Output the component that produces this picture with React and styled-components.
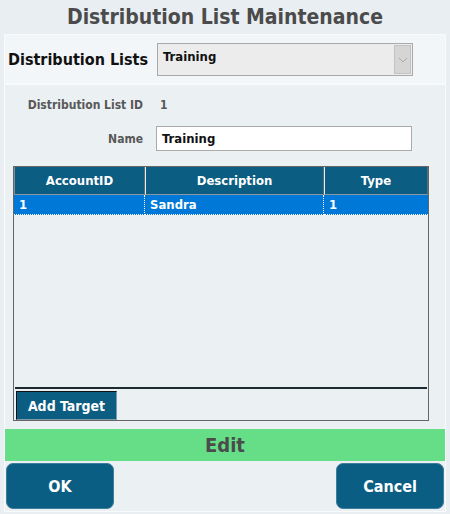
import styled, { createGlobalStyle } from 'styled-components';

const GlobalStyle = createGlobalStyle`
  html, body {
    margin: 0;
    padding: 0;
    background: #e9eef2;
  }
  body {
    font-family: "DejaVu Sans Condensed", "DejaVu Sans", sans-serif;
    font-weight: bold;
  }
`;

const Page = styled.div`
  width: 450px;
  height: 514px;
  box-sizing: border-box;
  padding: 0 4px 3px 4px;
  display: flex;
  flex-direction: column;
`;

const Title = styled.h1`
  margin: 0;
  height: 34px;
  line-height: 34px;
  text-align: center;
  font-size: 21px;
  color: #4b4b4b;
`;

const Panel = styled.div`
  flex: 1;
  display: flex;
  flex-direction: column;
  border: 1px solid #f8fafb;
  background: #ebf0f3;
`;

const ListBar = styled.div`
  height: 48px;
  display: flex;
  align-items: center;
  gap: 9px;
  padding-left: 3px;
  background: #f3f6f8;
  border-bottom: 2px solid #f8fafb;
  font-size: 16px;
  color: #111;
`;

const Select = styled.div`
  width: 248px;
  height: 31px;
  margin-top: 1px;
  display: flex;
  align-items: center;
  justify-content: space-between;
  padding: 0 1px 0 5px;
  border: 1px solid #a9a9a9;
  background: #ececec;
  font-size: 13px;
  color: #111;
`;

const SelectText = styled.span`
  align-self: flex-start;
  margin-top: 5px;
`;

const Arrow = styled.div`
  width: 15px;
  height: 27px;
  border: 1px solid #c2c2c2;
  background: #d5d5d5;
  display: flex;
  align-items: center;
  justify-content: center;
`;

const Form = styled.div`
  display: grid;
  grid-template-columns: 138px 256px;
  column-gap: 13px;
  row-gap: 9px;
  align-items: center;
  padding: 8px 0 0 0;
  font-size: 12px;
`;

const Label = styled.div`
  text-align: right;
  color: #585858;
  line-height: 24px;
`;

const Value = styled.div`
  color: #585858;
  padding-left: 4px;
  line-height: 24px;
`;

const Input = styled.div`
  height: 23px;
  line-height: 23px;
  border: 1px solid #aaa;
  background: #fff;
  padding-left: 5px;
  font-size: 13px;
  color: #111;
`;

const Grid = styled.div`
  margin: 15px 16px 0 8px;
  height: 253px;
  border: 1px solid #666;
  display: flex;
  flex-direction: column;
`;

const Row = styled.div`
  display: grid;
  grid-template-columns: 131px 179px 1fr;
`;

const HeadCell = styled.div`
  height: 27px;
  line-height: 27px;
  text-align: center;
  background: #0b5d82;
  color: #fff;
  font-size: 13px;
  border-left: 1px solid #e6ecef;
  border-right: 1px solid #5e6c75;
  border-bottom: 1px solid #8c989f;
  &:first-child { border-left-color: #7f8f99; }
`;

const Cell = styled.div`
  height: 19px;
  line-height: 19px;
  padding-left: 5px;
  background: ${p => (p.$selected ? '#0078d7' : 'transparent')};
  color: #fff;
  font-size: 13px;
  border-right: 1px dotted #fff;
  border-bottom: 1px dotted #fff;
  &:last-child { border-right: none; }
`;

const Body = styled.div`
  flex: 1;
`;

const GridFooter = styled.div`
  height: 33px;
  margin: 0 1px 0 1px;
  border-top: 2px solid #1d2a31;
  display: flex;
  align-items: flex-start;
  padding-top: 2px;
  box-sizing: border-box;
`;

const SmallButton = styled.button`
  width: 101px;
  height: 29px;
  margin-left: 1px;
  padding: 0;
  border: 1px solid #7d9baa;
  border-left-color: #111;
  border-top-color: #111;
  background: #0b5d82;
  color: #fff;
  font: inherit;
  font-size: 14px;
`;

const ModeBar = styled.div`
  margin-top: 8px;
  height: 32px;
  line-height: 32px;
  text-align: center;
  background: #66de88;
  color: #4b4b4b;
  font-size: 20px;
`;

const Footer = styled.div`
  display: flex;
  justify-content: space-between;
  padding: 2px 1px 2px 1px;
`;

const ActionButton = styled.button`
  width: 108px;
  height: 46px;
  border: 1px solid #3f7d9c;
  border-radius: 7px;
  background: #0b5e83;
  color: #fff;
  font: inherit;
  font-size: 16px;
`;

const rows = [{ id: '1', description: 'Sandra', type: '1' }];

export default function App() {
  return (
    <Page>
      <GlobalStyle />
      <Title>Distribution List Maintenance</Title>
      <Panel>
        <ListBar>
          <span>Distribution Lists</span>
          <Select>
            <SelectText>Training</SelectText>
            <Arrow>
              <svg width="10" height="6" viewBox="0 0 10 6">
                <path d="M1 1 L5 5 L9 1" fill="none" stroke="#a8a8a8" strokeWidth="1" />
              </svg>
            </Arrow>
          </Select>
        </ListBar>
        <Form>
          <Label>Distribution List ID</Label>
          <Value>1</Value>
          <Label>Name</Label>
          <Input>Training</Input>
        </Form>
        <Grid>
          <Row>
            <HeadCell>AccountID</HeadCell>
            <HeadCell>Description</HeadCell>
            <HeadCell>Type</HeadCell>
          </Row>
          {rows.map(r => (
            <Row key={r.id}>
              <Cell $selected>{r.id}</Cell>
              <Cell $selected>{r.description}</Cell>
              <Cell $selected>{r.type}</Cell>
            </Row>
          ))}
          <Body />
          <GridFooter>
            <SmallButton>Add Target</SmallButton>
          </GridFooter>
        </Grid>
        <ModeBar>Edit</ModeBar>
        <Footer>
          <ActionButton>OK</ActionButton>
          <ActionButton>Cancel</ActionButton>
        </Footer>
      </Panel>
    </Page>
  );
}
